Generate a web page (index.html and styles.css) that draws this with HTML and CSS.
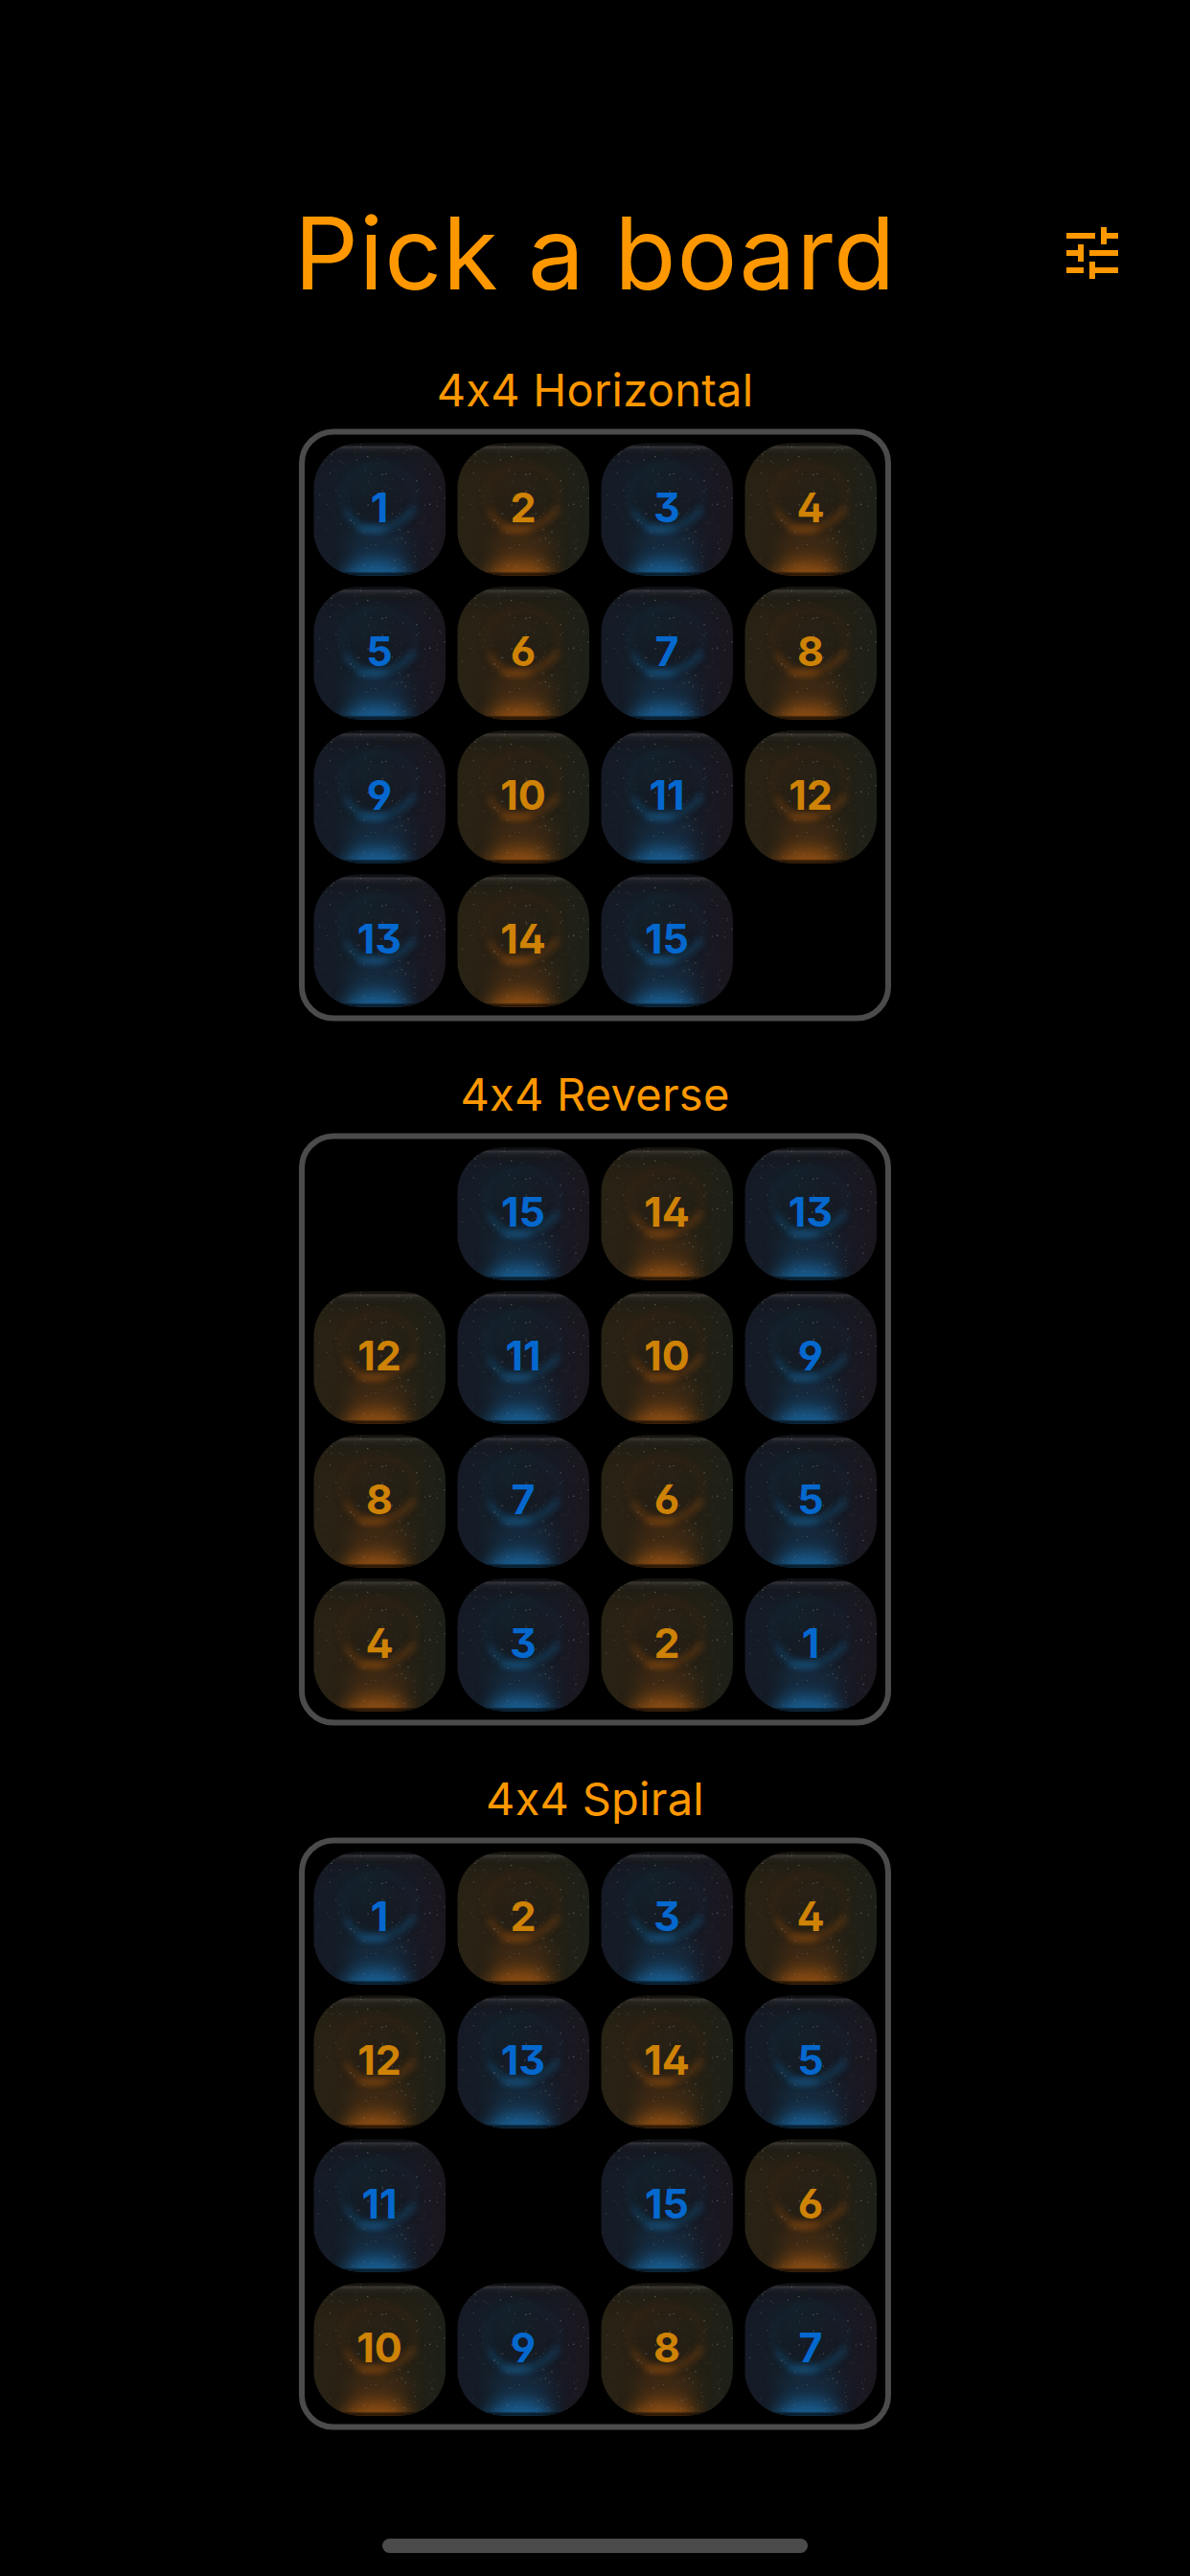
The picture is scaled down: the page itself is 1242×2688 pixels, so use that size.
FILE: index.html
```html
<!DOCTYPE html>
<html lang="en">
<head>
<meta charset="utf-8">
<title>Pick a board</title>
<link rel="stylesheet" href="styles.css">
</head>
<body>
<svg class="defs" aria-hidden="true">
  <defs>
    <filter id="soft" x="-50%" y="-80%" width="200%" height="260%" color-interpolation-filters="sRGB"><feGaussianBlur stdDeviation="3.5"/></filter>
    <filter id="wide" x="-60%" y="-60%" width="220%" height="220%" color-interpolation-filters="sRGB"><feGaussianBlur stdDeviation="9"/></filter>
    <clipPath id="shape"><rect x=".5" width="137.5" height="138" rx="47"/></clipPath>
    <linearGradient id="rim" x2="0" y2="1">
      <stop offset="0" stop-color="#000" stop-opacity=".4"/>
      <stop offset=".018" stop-color="#000" stop-opacity=".2"/>
      <stop offset=".028" stop-color="#fff" stop-opacity=".11"/>
      <stop offset=".05" stop-color="#fff" stop-opacity=".03"/>
      <stop offset=".08" stop-color="#fff" stop-opacity="0"/>
      <stop offset=".97" stop-color="#000" stop-opacity="0"/>
      <stop offset=".98" stop-color="#000" stop-opacity=".5"/>
      <stop offset="1" stop-color="#000" stop-opacity=".8"/>
    </linearGradient>
    <linearGradient id="blue-base">
      <stop offset="0" stop-color="#151a26"/><stop offset=".4" stop-color="#142029"/><stop offset=".75" stop-color="#171a24"/><stop offset="1" stop-color="#1b161d"/>
    </linearGradient>
    <linearGradient id="amber-base">
      <stop offset="0" stop-color="#282214"/><stop offset=".4" stop-color="#2a2115"/><stop offset=".75" stop-color="#242015"/><stop offset="1" stop-color="#1c2018"/>
    </linearGradient>
    <g id="stars" fill="#c4c4c4"></g>
    <symbol id="blue" viewBox="0 0 138 138"><g clip-path="url(#shape)">
      <rect width="138" height="138" fill="url(#blue-base)"/>
      <rect x="-20" width="178" height="30" y="-14" fill="#16171d" filter="url(#wide)"/>
      <ellipse cx="68" cy="112" rx="32" ry="26" fill="#17324c" opacity=".6" filter="url(#wide)"/>
      <ellipse cx="68" cy="56" rx="38" ry="33" fill="none" stroke="#173650" stroke-width="6" opacity=".22" filter="url(#soft)"/>
      <path d="M34 70q12 21 30 19 24-2 42-21" fill="none" stroke="#164566" stroke-width="8" opacity=".55" filter="url(#soft)"/>
      <ellipse cx="62" cy="90" rx="17" ry="3.5" fill="#1a5a8c" opacity=".65" filter="url(#soft)"/>
      <ellipse cx="66" cy="68" rx="24" ry="14" fill="#151b24" opacity=".8" filter="url(#soft)"/>
      <ellipse cx="66" cy="142" rx="34" ry="20" fill="#19639a" opacity=".95" filter="url(#wide)"/>
      <use href="#stars"/><rect width="138" height="138" fill="url(#rim)"/>
    </g></symbol>
    <symbol id="amber" viewBox="0 0 138 138"><g clip-path="url(#shape)">
      <rect width="138" height="138" fill="url(#amber-base)"/>
      <rect x="-20" width="178" height="30" y="-14" fill="#1e1d15" filter="url(#wide)"/>
      <ellipse cx="68" cy="112" rx="32" ry="26" fill="#4c2f14" opacity=".6" filter="url(#wide)"/>
      <ellipse cx="68" cy="56" rx="38" ry="33" fill="none" stroke="#4c2d13" stroke-width="6" opacity=".22" filter="url(#soft)"/>
      <path d="M34 70q12 21 30 19 24-2 42-21" fill="none" stroke="#673b12" stroke-width="8" opacity=".55" filter="url(#soft)"/>
      <ellipse cx="62" cy="90" rx="17" ry="3.5" fill="#874a10" opacity=".65" filter="url(#soft)"/>
      <ellipse cx="66" cy="68" rx="24" ry="14" fill="#261f15" opacity=".8" filter="url(#soft)"/>
      <ellipse cx="66" cy="142" rx="34" ry="20" fill="#935012" opacity=".95" filter="url(#wide)"/>
      <use href="#stars"/><rect width="138" height="138" fill="url(#rim)"/>
    </g></symbol>
  </defs>
</svg>
<header class="header">
  <h1 class="title">Pick a board</h1>
  <button class="settings" aria-label="Settings">
    <svg viewBox="0 0 24 24"><path d="M3 17v2h6v-2H3zM3 5v2h10V5H3zm10 16v-2h8v-2h-8v-2h-2v6h2zM7 9v2H3v2h4v2h2V9H7zm14 4v-2H11v2h10zm-6-4h2V7h4V5h-4V3h-2v6z"/></svg>
  </button>
</header>
<main class="boards" id="boards"></main>
<div class="home-indicator"></div>
<script src="boards.js"></script>
</body>
</html>
```
FILE: styles.css
```css
* { box-sizing: border-box; }
body {
  margin: 0;
  width: 1242px;
  height: 2688px;
  background: #000;
  color: #ff9800;
  font-family: Inter, "Liberation Sans", sans-serif;
  display: flex;
  flex-direction: column;
  align-items: center;
  overflow: hidden;
}
.defs { position: absolute; width: 0; height: 0; }
.header {
  width: 100%;
  height: 216px;
  margin: 156px 0 0;
  padding: 0 66px;
  display: grid;
  grid-template-columns: 72px 1fr 72px;
  align-items: center;
  flex: none;
}
.title {
  grid-column: 2;
  margin: 0;
  text-align: center;
  font-size: 105px;
  font-weight: 400;
  line-height: 128px;
  letter-spacing: 0.9px;
  white-space: nowrap;
}
.settings {
  width: 72px;
  height: 72px;
  padding: 0;
  border: 0;
  background: none;
}
.settings svg { display: block; width: 72px; height: 72px; fill: #ff9800; }
.boards { display: flex; flex-direction: column; gap: 42px; }
.board-option { display: flex; flex-direction: column; align-items: center; }
.board-name {
  margin: 0;
  height: 75px;
  font-size: 47px;
  line-height: 70px;
  font-weight: 400;
  letter-spacing: 0.25px;
}
.board {
  width: 618px;
  height: 618px;
  padding: 9px;
  border: 6px solid #4b4b4b;
  border-radius: 36px;
  display: grid;
  grid-template-columns: repeat(4, 138px);
  grid-template-rows: repeat(4, 138px);
  gap: 12px;
  transform: translateY(0.5px);
}
.tile { display: grid; width: 138px; height: 138px; place-items: center; }
.tile > * { grid-area: 1 / 1; }
.tile svg { width: 138px; height: 138px; }
.number {
  z-index: 1;
  font-size: 43px;
  line-height: 52px;
  font-weight: 700;
  font-feature-settings: "ss01";
  transform: translateY(-2.5px);
}
.blue .number { color: #0568ce; }
.amber .number { color: #ce8206; }
.home-indicator {
  width: 444px;
  height: 15px;
  margin-top: 114px;
  border-radius: 8px;
  background: #4b4b4b;
  flex: none;
}
```
FILE: boards.js
```js
const layouts = [
  ["4x4 Horizontal", [1, 2, 3, 4, 5, 6, 7, 8, 9, 10, 11, 12, 13, 14, 15, 0]],
  ["4x4 Reverse", [0, 15, 14, 13, 12, 11, 10, 9, 8, 7, 6, 5, 4, 3, 2, 1]],
  ["4x4 Spiral", [1, 2, 3, 4, 12, 13, 14, 5, 11, 0, 15, 6, 10, 9, 8, 7]],
];

// Star dust shared by every tile, from a seeded generator so it never changes.
let seed = 90210;
const random = () => {
  seed = (seed + 0x6d2b79f5) | 0;
  let t = Math.imul(seed ^ (seed >>> 15), 1 | seed);
  t = (t + Math.imul(t ^ (t >>> 7), 61 | t)) ^ t;
  return ((t ^ (t >>> 14)) >>> 0) / 4294967296;
};
let dust = "";
for (let i = 0; i < 230; i++) {
  const r = 0.4 + random() * 0.4;
  const opacity = 0.07 + random() ** 2 * 0.35;
  dust += `<circle cx="${(random() * 138).toFixed(1)}" cy="${(random() * 138).toFixed(1)}" r="${r.toFixed(2)}" opacity="${opacity.toFixed(2)}"/>`;
}
document.getElementById("stars").innerHTML = dust;

document.getElementById("boards").innerHTML = layouts.map(([name, numbers]) => {
  const tiles = numbers.map((n) => {
    if (!n) return '<div class="tile"></div>';
    const tone = n % 2 ? "blue" : "amber";
    return `<div class="tile ${tone}"><svg><use href="#${tone}"/></svg><span class="number">${n}</span></div>`;
  }).join("");
  return `<section class="board-option"><h2 class="board-name">${name}</h2><div class="board">${tiles}</div></section>`;
}).join("");
```
